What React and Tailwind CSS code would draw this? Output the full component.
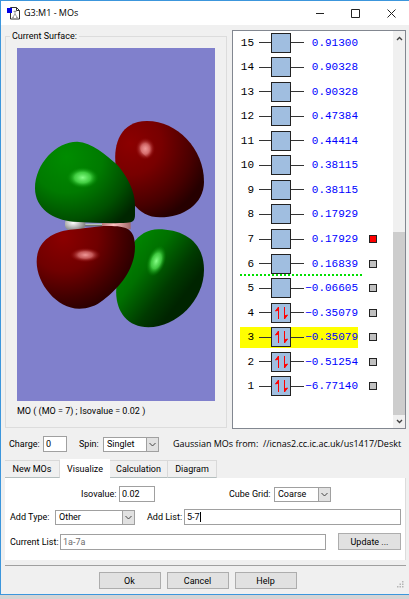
import React, { useEffect, useRef, useState } from 'react';

const orbitals = [
  { n: 15, energy: '0.91300' },
  { n: 14, energy: '0.90328' },
  { n: 13, energy: '0.90328' },
  { n: 12, energy: '0.47384' },
  { n: 11, energy: '0.44414' },
  { n: 10, energy: '0.38115' },
  { n: 9, energy: '0.38115' },
  { n: 8, energy: '0.17929' },
  { n: 7, energy: '0.17929', surface: 'shown' },
  { n: 6, energy: '0.16839', surface: 'ready', gapBelow: true },
  { n: 5, energy: '−0.06605', surface: 'ready' },
  { n: 4, energy: '−0.35079', surface: 'ready', filled: true },
  { n: 3, energy: '−0.35079', surface: 'ready', filled: true },
  { n: 2, energy: '−0.51254', surface: 'ready', filled: true },
  { n: 1, energy: '−6.77140', surface: 'ready', filled: true },
];

const TitleBar = () => (
  <header className="flex h-6 items-center bg-white pl-1.5 text-[9px] text-black">
    <svg width="14" height="14" viewBox="0 0 14 14" className="mr-[3px]">
      <path d="M3.5 1.500h6l3 3v8.500h-9z" fill="#fff" stroke="#333" />
      <path d="M9.5 1.500v3h3" fill="none" stroke="#333" />
      <path d="M8 4.500v3.500M8 8l-2 3M8 8l2 3M6.500 5.500h3M5 11.500h2M9 11.500h2" fill="none" stroke="#888" strokeWidth=".8" />
      <rect x="0" y="2" width="5" height="5" fill="#0000e6" />
    </svg>
    <h1 className="flex-1 font-['Open_Sans',sans-serif]">G3:M1 - MOs</h1>
    <button aria-label="Minimize" className="flex h-6 w-9 items-center justify-center">
      <svg width="9" height="9" viewBox="0 0 9 9"><path d="M1 4.5h8" stroke="#222" /></svg>
    </button>
    <button aria-label="Maximize" className="flex h-6 w-9 items-center justify-center">
      <svg width="9" height="9" viewBox="0 0 9 9"><path d="M.5 .5h8v8h-8z" fill="none" stroke="#222" /></svg>
    </button>
    <button aria-label="Close" className="flex h-6 w-9 items-center justify-center">
      <svg width="9" height="9" viewBox="0 0 9 9"><path d="M.5 .5l8 8M8.5 .5l-8 8" stroke="#222" /></svg>
    </button>
  </header>
);

const Surface = () => (
  <svg viewBox="17 48 198 353" className="block w-full bg-[#8080cc]" role="img" aria-label="Molecular orbital surface">
    <defs>
      <radialGradient id="redTop" gradientUnits="userSpaceOnUse" cx="330" cy="130" r="270">
        <stop offset="0" stopColor="#8c0000" />
        <stop offset=".35" stopColor="#780000" />
        <stop offset=".7" stopColor="#480000" />
        <stop offset=".9" stopColor="#260000" />
      </radialGradient>
      <radialGradient id="greenTop" gradientUnits="userSpaceOnUse" cx="140" cy="170" r="270">
        <stop offset="0" stopColor="#008c00" />
        <stop offset=".4" stopColor="#007a00" />
        <stop offset=".7" stopColor="#005000" />
        <stop offset=".92" stopColor="#002600" />
      </radialGradient>
      <radialGradient id="redLow" gradientUnits="userSpaceOnUse" cx="130" cy="410" r="260">
        <stop offset="0" stopColor="#8c0000" />
        <stop offset=".4" stopColor="#700000" />
        <stop offset=".7" stopColor="#420000" />
        <stop offset=".9" stopColor="#260000" />
      </radialGradient>
      <linearGradient id="greenLow" gradientUnits="userSpaceOnUse" x1="325" y1="440" x2="500" y2="575">
        <stop offset="0" stopColor="#008600" />
        <stop offset=".35" stopColor="#007000" />
        <stop offset=".75" stopColor="#003a00" />
        <stop offset="1" stopColor="#002400" />
      </linearGradient>
      <radialGradient id="redShine">
        <stop offset="0" stopColor="#f09898" />
        <stop offset=".45" stopColor="#d87070" stopOpacity=".8" />
        <stop offset="1" stopColor="#8c0000" stopOpacity="0" />
      </radialGradient>
      <radialGradient id="greenShine">
        <stop offset="0" stopColor="#88ff88" />
        <stop offset=".5" stopColor="#50e050" stopOpacity=".8" />
        <stop offset="1" stopColor="#008c00" stopOpacity="0" />
      </radialGradient>
      <radialGradient id="atom" cx=".4" cy=".4" r=".6">
        <stop offset="0" stopColor="#fff" />
        <stop offset="1" stopColor="#858585" />
      </radialGradient>
      <linearGradient id="boron">
        <stop offset="0" stopColor="#b87878" />
        <stop offset=".4" stopColor="#ffc0c0" />
        <stop offset="1" stopColor="#a06868" />
      </linearGradient>
    </defs>
    <g transform="translate(20 100) scale(.33333)">
      <path d="M190 371h60v7h-60z" fill="#b8c0b8" />
      <path d="M190 376h60v3h-60z" fill="#4c504c" />
      <rect x="135" y="352" width="61" height="40" rx="16" fill="url(#atom)" />
      <rect x="246" y="360" width="86" height="28" fill="url(#boron)" />
      <path d="M380 63C470 62 552 145 552 245C552 312 490 352 420 352C385 352 360 336 340 312L287 196C279 130 303 64 380 63Z" fill="url(#redTop)" />
      <path d="M172 125C215 127 258 164 290 193C322 228 345 275 345 315V345C345 362 338 368 320 368C280 371 220 369 160 365C100 361 45 325 45 265C45 190 110 124 172 125Z" fill="url(#greenTop)" />
      <path d="M415 388C490 388 552 425 552 510C552 600 470 682 385 682C320 682 284 630 289 565L340 430C355 405 385 388 415 388Z" fill="url(#greenLow)" />
      <path d="M50 485C50 425 95 396 150 389C195 386 225 378 265 378C320 378 345 386 345 440C345 510 295 566 250 600C228 618 203 626 178 626C110 626 50 550 50 485Z" fill="url(#redLow)" />
      <ellipse cx="188" cy="233" rx="48" ry="32" fill="url(#greenShine)" />
      <path d="M352 130L390 124L398 150L385 178L366 158Z" fill="url(#redShine)" />
      <ellipse cx="376" cy="146" rx="30" ry="34" fill="url(#redShine)" />
      <ellipse cx="196" cy="465" rx="47" ry="22" fill="url(#redShine)" />
      <ellipse cx="409" cy="483" rx="27" ry="48" fill="url(#greenShine)" transform="rotate(20 409 483)" />
    </g>
  </svg>
);

const Electrons = () => (
  <svg width="18" height="18" viewBox="0 0 18 18" fill="#ff0000" stroke="#ff0000">
    <path d="M6.500 15V3L3.500 7L6.500 6" />
    <path d="M12.500 3V15L15.500 11L12.500 12" />
  </svg>
);

const OrbitalRow = ({ orbital, active }) => {
  const { n, energy, surface, filled, gapBelow } = orbital;
  return (
    <li className="relative flex items-center">
      <div className={`flex h-[21px] w-[118px] items-center ${active ? 'bg-[#ffff00]' : ''}`}>
        <span className="w-3.5 text-right text-black">{n}</span>
        <span className="ml-[5px] h-px w-3 bg-[#333]" />
        <span className="h-5 w-5 border border-[#222] bg-[#a0bee0]">{filled && <Electrons />}</span>
        <span className="h-px w-[13px] bg-[#333]" />
        <span className="flex-1 text-right text-[#0000ff]">{energy}</span>
      </div>
      {surface && (
        <button
          aria-label={`Surface ${n}`}
          className={`ml-[11px] h-2 w-2 border border-[#222] ${surface === 'shown' ? 'bg-[#ff0000]' : 'bg-[#c0c0c0]'}`}
        />
      )}
      {gapBelow && <span className="absolute -bottom-0.5 left-0 w-[122px] border-b-2 border-dotted border-[#00e000]" />}
    </li>
  );
};

const ScrollBar = () => (
  <div className="flex w-3 flex-col bg-[#f0f0f0]">
    <button aria-label="Scroll up" className="flex h-[14px] items-center justify-center">
      <svg width="7" height="5" viewBox="0 0 7 5"><path d="M1 4l2.500-2.500L6 4" fill="none" stroke="#444" strokeWidth="1.400" /></svg>
    </button>
    <div className="flex flex-1 flex-col justify-end">
      <div className="h-[183px] bg-[#cdcdcd]" />
    </div>
    <button aria-label="Scroll down" className="flex h-[13px] items-center justify-center">
      <svg width="7" height="5" viewBox="0 0 7 5"><path d="M1 1l2.500 2.500L6 1" fill="none" stroke="#444" strokeWidth="1.400" /></svg>
    </button>
  </div>
);

const SelectBox = ({ id, value, options, className }) => (
  <div className={`relative ${className}`}>
    <select id={id} defaultValue={value} className="block h-[15px] w-full appearance-none border border-[#a0a0a0] bg-white pl-[3px] text-black">
      {options.map((o) => (
        <option key={o}>{o}</option>
      ))}
    </select>
    <span className="pointer-events-none absolute inset-y-0 right-0 flex w-[13px] items-center justify-center border border-[#a0a0a0] bg-[#e1e1e1]">
      <svg width="7" height="5" viewBox="0 0 7 5"><path d="M.5 1l3 3 3-3" fill="none" stroke="#444" /></svg>
    </span>
  </div>
);

const PushButton = ({ children, className }) => (
  <button className={`h-[17px] border border-[#adadad] bg-[#e1e1e1] text-black ${className}`}>{children}</button>
);

const field = 'h-4 min-w-0 border border-[#a0a0a0] bg-white px-0.5 outline-none';

const tabs = [
  { name: 'New MOs', width: 'w-[55px]' },
  { name: 'Visualize', width: 'w-[50px]' },
  { name: 'Calculation', width: 'w-[58px]' },
  { name: 'Diagram', width: 'w-[49px]' },
];

const App = () => {
  const [tab, setTab] = useState('Visualize');
  const [list, setList] = useState('5-7');
  const addList = useRef(null);

  useEffect(() => {
    addList.current.focus();
    addList.current.setSelectionRange(3, 3);
  }, []);

  return (
    <div className="bg-[#d4d4d4] pb-[5px] font-[Roboto,sans-serif] text-[9px] leading-3 text-black">
      <div className="border-y border-l border-[#3c96dc] bg-[#f0f0f0]">
        <TitleBar />

        <main className="pl-1 pr-[3px]">
          <div className="flex gap-[5px] pt-[5px]">
            <fieldset className="mb-px mt-0 min-w-0 flex-1 border border-[#dcdcdc] px-[11px] pb-2">
              <legend className="-ml-[7px] px-0.5">Current Surface:</legend>
              <div className="pt-[6px]">
                <Surface />
              </div>
              <p className="pt-1">MO ( (MO = 7) ; Isovalue = 0.02 )</p>
            </fieldset>

            <div className="flex h-[399px] w-[174px] border border-[#828790] bg-white">
              <ol className="grid h-[366px] flex-1 auto-rows-[21px] content-between pl-[7px] pt-px font-['Liberation_Mono',monospace] text-[11px]">
                {orbitals.map((o) => (
                  <OrbitalRow key={o.n} orbital={o} active={o.n === 3} />
                ))}
              </ol>
              <ScrollBar />
            </div>
          </div>

          <div className="mt-[7px] flex items-center whitespace-nowrap pl-1">
            <label htmlFor="charge" className="w-[34px]">Charge:</label>
            <input id="charge" defaultValue="0" className={`${field} w-6`} />
            <label htmlFor="spin" className="ml-3 w-6">Spin:</label>
            <SelectBox id="spin" value="Singlet" options={['Singlet', 'Triplet']} className="w-14" />
            <p className="ml-3.5 font-['Open_Sans',sans-serif]">Gaussian MOs from: &nbsp;//icnas2.cc.ic.ac.uk/us1417/Deskt</p>
          </div>

          <div className="mt-[7px] flex items-end" role="tablist">
            {tabs.map((t) => (
              <button
                key={t.name}
                role="tab"
                aria-selected={tab === t.name}
                onClick={() => setTab(t.name)}
                className={`${t.width} ${
                  tab === t.name
                    ? 'h-[19px] bg-white'
                    : 'h-[18px] border-r border-t border-b border-[#d9d9d9] border-b-[#b4bebe] bg-[#f0f0f0]'
                }`}
              >
                {t.name}
              </button>
            ))}
          </div>

          <div className="border-r border-[#dcdcdc] bg-white pb-2.5 pl-[5px] pr-1 pt-2" role="tabpanel">
            <div className="flex items-center">
              <label htmlFor="isovalue" className="ml-[71px] w-[38px]">Isovalue:</label>
              <input id="isovalue" defaultValue="0.02" className={`${field} w-9`} />
              <label htmlFor="grid" className="ml-auto w-[45px]">Cube Grid:</label>
              <SelectBox id="grid" value="Coarse" options={['Coarse', 'Medium', 'Fine']} className="mr-[70px] w-[57px]" />
            </div>
            <div className="mt-[7px] flex items-center">
              <label htmlFor="type" className="w-[45px]">Add Type:</label>
              <SelectBox id="type" value="Other" options={['Other', 'HOMO', 'LUMO']} className="w-20" />
              <label htmlFor="list" className="ml-3 w-[37px]">Add List:</label>
              <div className="relative flex flex-1">
                <input
                  id="list"
                  ref={addList}
                  value={list}
                  onChange={(e) => setList(e.target.value)}
                  className={`${field} flex-1 ${list === '5-7' ? 'caret-transparent' : ''}`}
                />
                {list === '5-7' && <span className="pointer-events-none absolute left-4 top-[3px] h-2.5 w-px bg-black" />}
              </div>
            </div>
            <div className="mt-2 flex items-center">
              <label htmlFor="current" className="w-[50px]">Current List:</label>
              <input id="current" readOnly value="1a-7a" className={`${field} flex-1 text-[#6d6d6d]`} />
              <PushButton className="ml-3 w-[63px]">Update ...</PushButton>
            </div>
          </div>

          <footer className="relative mt-[5px] flex justify-center gap-1.5 border-t border-[#a0a0a0] pb-[5px] pr-4 pt-1.5">
            <PushButton className="w-[62px]">Ok</PushButton>
            <PushButton className="w-[62px]">Cancel</PushButton>
            <PushButton className="w-[62px]">Help</PushButton>
            <svg width="7" height="7" viewBox="0 0 7 7" fill="#b4b4b4" className="absolute bottom-1.5 right-0.5">
              <path d="M5 0h1.500v1.500H5zM2.500 2.500H4V4H2.500zM5 2.500h1.500V4H5zM0 5h1.500v1.500H0zM2.500 5H4v1.500H2.500zM5 5h1.500v1.500H5z" />
            </svg>
          </footer>
        </main>
      </div>
    </div>
  );
};

export default App;
